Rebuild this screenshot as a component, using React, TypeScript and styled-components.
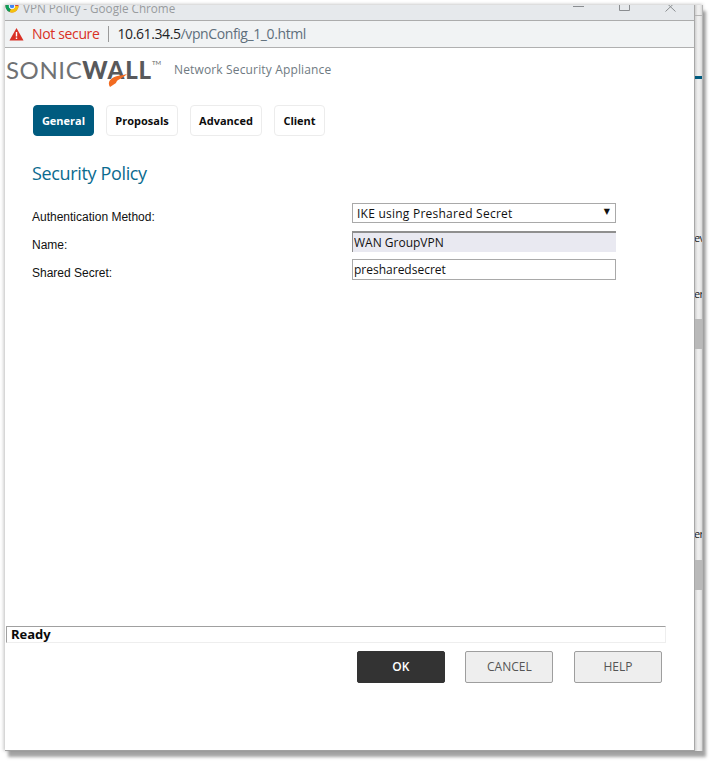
import React from "react";
import styled, { createGlobalStyle } from "styled-components";

const Global = createGlobalStyle`
  html, body { margin: 0; padding: 0; background: #fff; }
  body { width: 712px; height: 766px; overflow: hidden; font-family: "Liberation Sans", Arial, sans-serif; }
  * { box-sizing: border-box; }
`;

const Desktop = styled.div`
  width: 712px;
  height: 766px;
  padding: 5px 0 0 5px;
`;
const Frame = styled.div`
  display: flex;
  width: 698px;
  height: 746px;
  box-shadow: 3px 6px 3px rgba(90, 90, 90, 0.55), -2px 0 3px rgba(120, 120, 120, 0.25), 0 -1px 3px rgba(120, 120, 120, 0.25);
`;
const Win = styled.div`
  display: flex;
  flex-direction: column;
  flex: 0 0 690px;
  background: #fff;
  border-right: 1px solid #a8a8a8;
  border-bottom: 1px solid #a0a0a0;
`;
const TitleBar = styled.div`
  display: flex;
  flex: 0 0 16px;
  align-items: flex-end;
  height: 16px;
  overflow: hidden;
  background: #e6e9ec;
  border-bottom: 1px solid #acacac;
`;
const ChromeIcon = styled.svg`
  flex: none;
  margin-bottom: 7px;
`;
const TitleText = styled.span`
  margin-left: 4px;
  margin-bottom: 5px;
  font: 11.7px/14px "Open Sans", sans-serif;
  color: #989b9e;
  white-space: nowrap;
`;
const WinControls = styled.div`
  display: flex;
  align-items: flex-end;
  gap: 35px;
  margin-left: auto;
  margin-right: 18px;
  margin-bottom: 8px;
`;
const AddressBar = styled.div`
  display: flex;
  flex: 0 0 27px;
  align-items: center;
  padding-left: 4px;
  background: #f1f3f4;
  border-bottom: 1px solid #b0b0b0;
`;
const NotSecure = styled.span`
  margin-left: 8px;
  font: 14px/18px "Open Sans", sans-serif;
  letter-spacing: -0.35px;
  color: #d93025;
`;
const Divider = styled.span`
  width: 1px;
  height: 16px;
  margin: 0 9px 0 8px;
  background: #9a9a9a;
`;
const Url = styled.span`
  font: 14px/18px "Open Sans", sans-serif;
  letter-spacing: -0.4px;
  color: #1f2326;
`;
const UrlPath = styled.span`
  color: #5f6f7c;
`;
const Brand = styled.div`
  display: flex;
  align-items: center;
  height: 44px;
  padding-left: 1px;
`;
const Logo = styled.div`
  position: relative;
  display: flex;
  align-items: flex-start;
  width: 168px;
  font: 400 24px/28px "Lato", sans-serif;
  letter-spacing: 0.6px;
  color: #707274;
`;
const LogoBold = styled.span`
  font-weight: 900;
  color: #58595b;
  letter-spacing: 0.9px;
`;
const Tm = styled.span`
  font-size: 6px;
  line-height: 14px;
  letter-spacing: 0;
  color: #666;
`;
const Swoosh = styled.svg`
  position: absolute;
  left: 101px;
  top: 17px;
`;
const Tagline = styled.span`
  font: 12px/16px "Open Sans", sans-serif;
  letter-spacing: 0.15px;
  color: #6f7a82;
`;
const Tabs = styled.div`
  display: flex;
  gap: 12px;
  margin: 13px 0 0 28px;
`;
const Tab = styled.div<{ $active?: boolean; $w: number }>`
  display: flex;
  align-items: center;
  justify-content: center;
  width: ${(p) => p.$w}px;
  height: 31px;
  border: 1px solid ${(p) => (p.$active ? "#005b7f" : "#ececec")};
  border-radius: 4px;
  background: ${(p) => (p.$active ? "#005b7f" : "#fff")};
  color: ${(p) => (p.$active ? "#fff" : "#0d0d0d")};
  font: 700 11px/14px "Open Sans", sans-serif;
`;
const Heading = styled.h1`
  margin: 25px 0 0 27px;
  font: 400 18px/24px "Open Sans", sans-serif;
  letter-spacing: -0.35px;
  color: #0b6b8f;
`;
const Form = styled.div`
  display: grid;
  grid-template-columns: 320px 264px;
  grid-auto-rows: 21px;
  row-gap: 7px;
  margin: 18px 0 0 27px;
`;
const Label = styled.label`
  display: flex;
  align-items: center;
  padding-top: 6px;
  font: 12px/14px "Liberation Sans", sans-serif;
  color: #111;
`;
const SelectWrap = styled.div`
  position: relative;
  height: 20px;
`;
const Select = styled.select`
  width: 100%;
  height: 20px;
  padding: 2px 0 0 4px;
  appearance: none;
  background: #fff;
  border: 1px solid #a9a9a9;
  border-radius: 0;
  font: 12px/16px "Open Sans", sans-serif;
  letter-spacing: 0.24px;
  color: #111;
`;
const Caret = styled.span`
  position: absolute;
  right: 6px;
  top: 4px;
  font: 8px/10px "DejaVu Sans", sans-serif;
  color: #111;
`;
const TextField = styled.input<{ $readonly?: boolean }>`
  width: 100%;
  height: 21px;
  padding: 0 0 0 1px;
  outline: none;
  border-radius: 0;
  font: 12px/18px "Open Sans", sans-serif;
  color: #111;
  background: ${(p) => (p.$readonly ? "#e9e9f1" : "#fff")};
  border: ${(p) => (p.$readonly ? "0" : "1px solid #a9a9a9")};
  border-top: ${(p) => (p.$readonly ? "2px solid #8f8f8f" : "1px solid #a9a9a9")};
  border-left: ${(p) => (p.$readonly ? "1px solid #8f8f8f" : "1px solid #a9a9a9")};
`;
const Status = styled.div`
  height: 17px;
  margin: auto 28px 0 1px;
  padding-left: 4px;
  border: 1px solid #eee;
  border-top-color: #a0a0a0;
  border-left-color: #a0a0a0;
  font: 700 13px/15px "Open Sans", sans-serif;
  color: #0a0a0a;
`;
const Actions = styled.div`
  display: flex;
  justify-content: flex-end;
  gap: 20.6px;
  margin: 8px 32px 67px 0;
`;
const Action = styled.button<{ $primary?: boolean }>`
  width: 88px;
  height: 32px;
  padding: 0;
  border: 1px solid ${(p) => (p.$primary ? "#333" : "#9e9e9e")};
  border-radius: 2px;
  background: ${(p) => (p.$primary ? "#333" : "#eee")};
  color: ${(p) => (p.$primary ? "#fff" : "#555")};
  font: ${(p) => (p.$primary ? 600 : 400)} 12px/16px "Open Sans", sans-serif;
`;
const Backdrop = styled.div`
  display: flex;
  flex-direction: column;
  flex: 0 0 8px;
  overflow: hidden;
  background: linear-gradient(90deg, #cfcfcf, #efefef 40%, #ececec 70%, #d8d8d8);
  border-right: 1px solid #b5b5b5;
`;
const BackRule = styled.div`
  flex: 0 0 1px;
  margin-top: 10px;
  background: #b5b5b5;
`;
const BackAccent = styled.div`
  flex: 0 0 3px;
  margin-top: 60px;
  background: #005b7f;
`;
const BackText = styled.div<{ $top: number }>`
  margin-top: ${(p) => p.$top}px;
  font: 11px/14px "Open Sans", sans-serif;
  letter-spacing: -0.6px;
  text-indent: -1px;
  color: #222;
  white-space: nowrap;
`;
const BackBlock = styled.div<{ $top: number }>`
  flex: 0 0 30px;
  margin-top: ${(p) => p.$top}px;
  background: #b9b9b9;
`;

export default function App() {
  return (
    <Desktop>
      <Global />
      <Frame>
        <Win>
          <TitleBar>
            <ChromeIcon width="14" height="14" viewBox="0 0 14 14">
              <circle cx="7" cy="7" r="6.5" fill="#db4437" />
              <path d="M7 7 L13.5 7 A6.5 6.5 0 0 1 4.5 13 Z" fill="#f4c20d" />
              <path d="M7 7 L4.5 13 A6.5 6.5 0 0 1 1.2 4 Z" fill="#0f9d58" />
              <circle cx="7" cy="7" r="2.8" fill="#4285f4" stroke="#fff" strokeWidth="1" />
            </ChromeIcon>
            <TitleText>VPN Policy - Google Chrome</TitleText>
            <WinControls>
              <svg width="11" height="8" viewBox="0 0 11 8"><path d="M0 2.5H11" stroke="#8a8d90" /></svg>
              <svg width="11" height="8" viewBox="0 0 11 8"><path d="M.5 0V6.5H10.5V0" fill="none" stroke="#8a8d90" /></svg>
              <svg width="11" height="8" viewBox="0 0 11 8"><path d="M.5 -2L10.5 7.5M10.5 -2L.5 7.5" fill="none" stroke="#8a8d90" /></svg>
            </WinControls>
          </TitleBar>
          <AddressBar>
            <svg width="15" height="14" viewBox="0 0 15 14">
              <path d="M7.5 1 L14.5 13.5 H.5 Z" fill="#d93025" />
              <path d="M7.5 5V9.5M7.5 10.5V12" stroke="#fff" strokeWidth="1.4" />
            </svg>
            <NotSecure>Not secure</NotSecure>
            <Divider />
            <Url>10.61.34.5<UrlPath>/vpnConfig_1_0.html</UrlPath></Url>
          </AddressBar>
          <Brand>
            <Logo>
              SONIC<LogoBold>WALL</LogoBold><Tm>TM</Tm>
              <Swoosh width="20" height="14" viewBox="0 0 20 14">
                <path d="M3 14 C-1 8 6 3 14 2.5 L20 1 C15 6 10 6 9 10 Z" fill="#f26b21" />
              </Swoosh>
            </Logo>
            <Tagline>Network Security Appliance</Tagline>
          </Brand>
          <Tabs>
            <Tab $active $w={61}>General</Tab>
            <Tab $w={72}>Proposals</Tab>
            <Tab $w={72}>Advanced</Tab>
            <Tab $w={51}>Client</Tab>
          </Tabs>
          <Heading>Security Policy</Heading>
          <Form>
            <Label>Authentication Method:</Label>
            <SelectWrap>
              <Select defaultValue="ike">
                <option value="ike">IKE using Preshared Secret</option>
              </Select>
              <Caret>▼</Caret>
            </SelectWrap>
            <Label>Name:</Label>
            <TextField $readonly readOnly defaultValue="WAN GroupVPN" />
            <Label>Shared Secret:</Label>
            <TextField readOnly defaultValue="presharedsecret" />
          </Form>
          <Status>Ready</Status>
          <Actions>
            <Action $primary>OK</Action>
            <Action>CANCEL</Action>
            <Action>HELP</Action>
          </Actions>
        </Win>
        <Backdrop>
          <BackRule />
          <BackAccent />
          <BackText $top={152}>ev</BackText>
          <BackText $top={42}>er</BackText>
          <BackBlock $top={18} />
          <BackText $top={178}>er</BackText>
          <BackBlock $top={19} />
        </Backdrop>
      </Frame>
    </Desktop>
  );
}
